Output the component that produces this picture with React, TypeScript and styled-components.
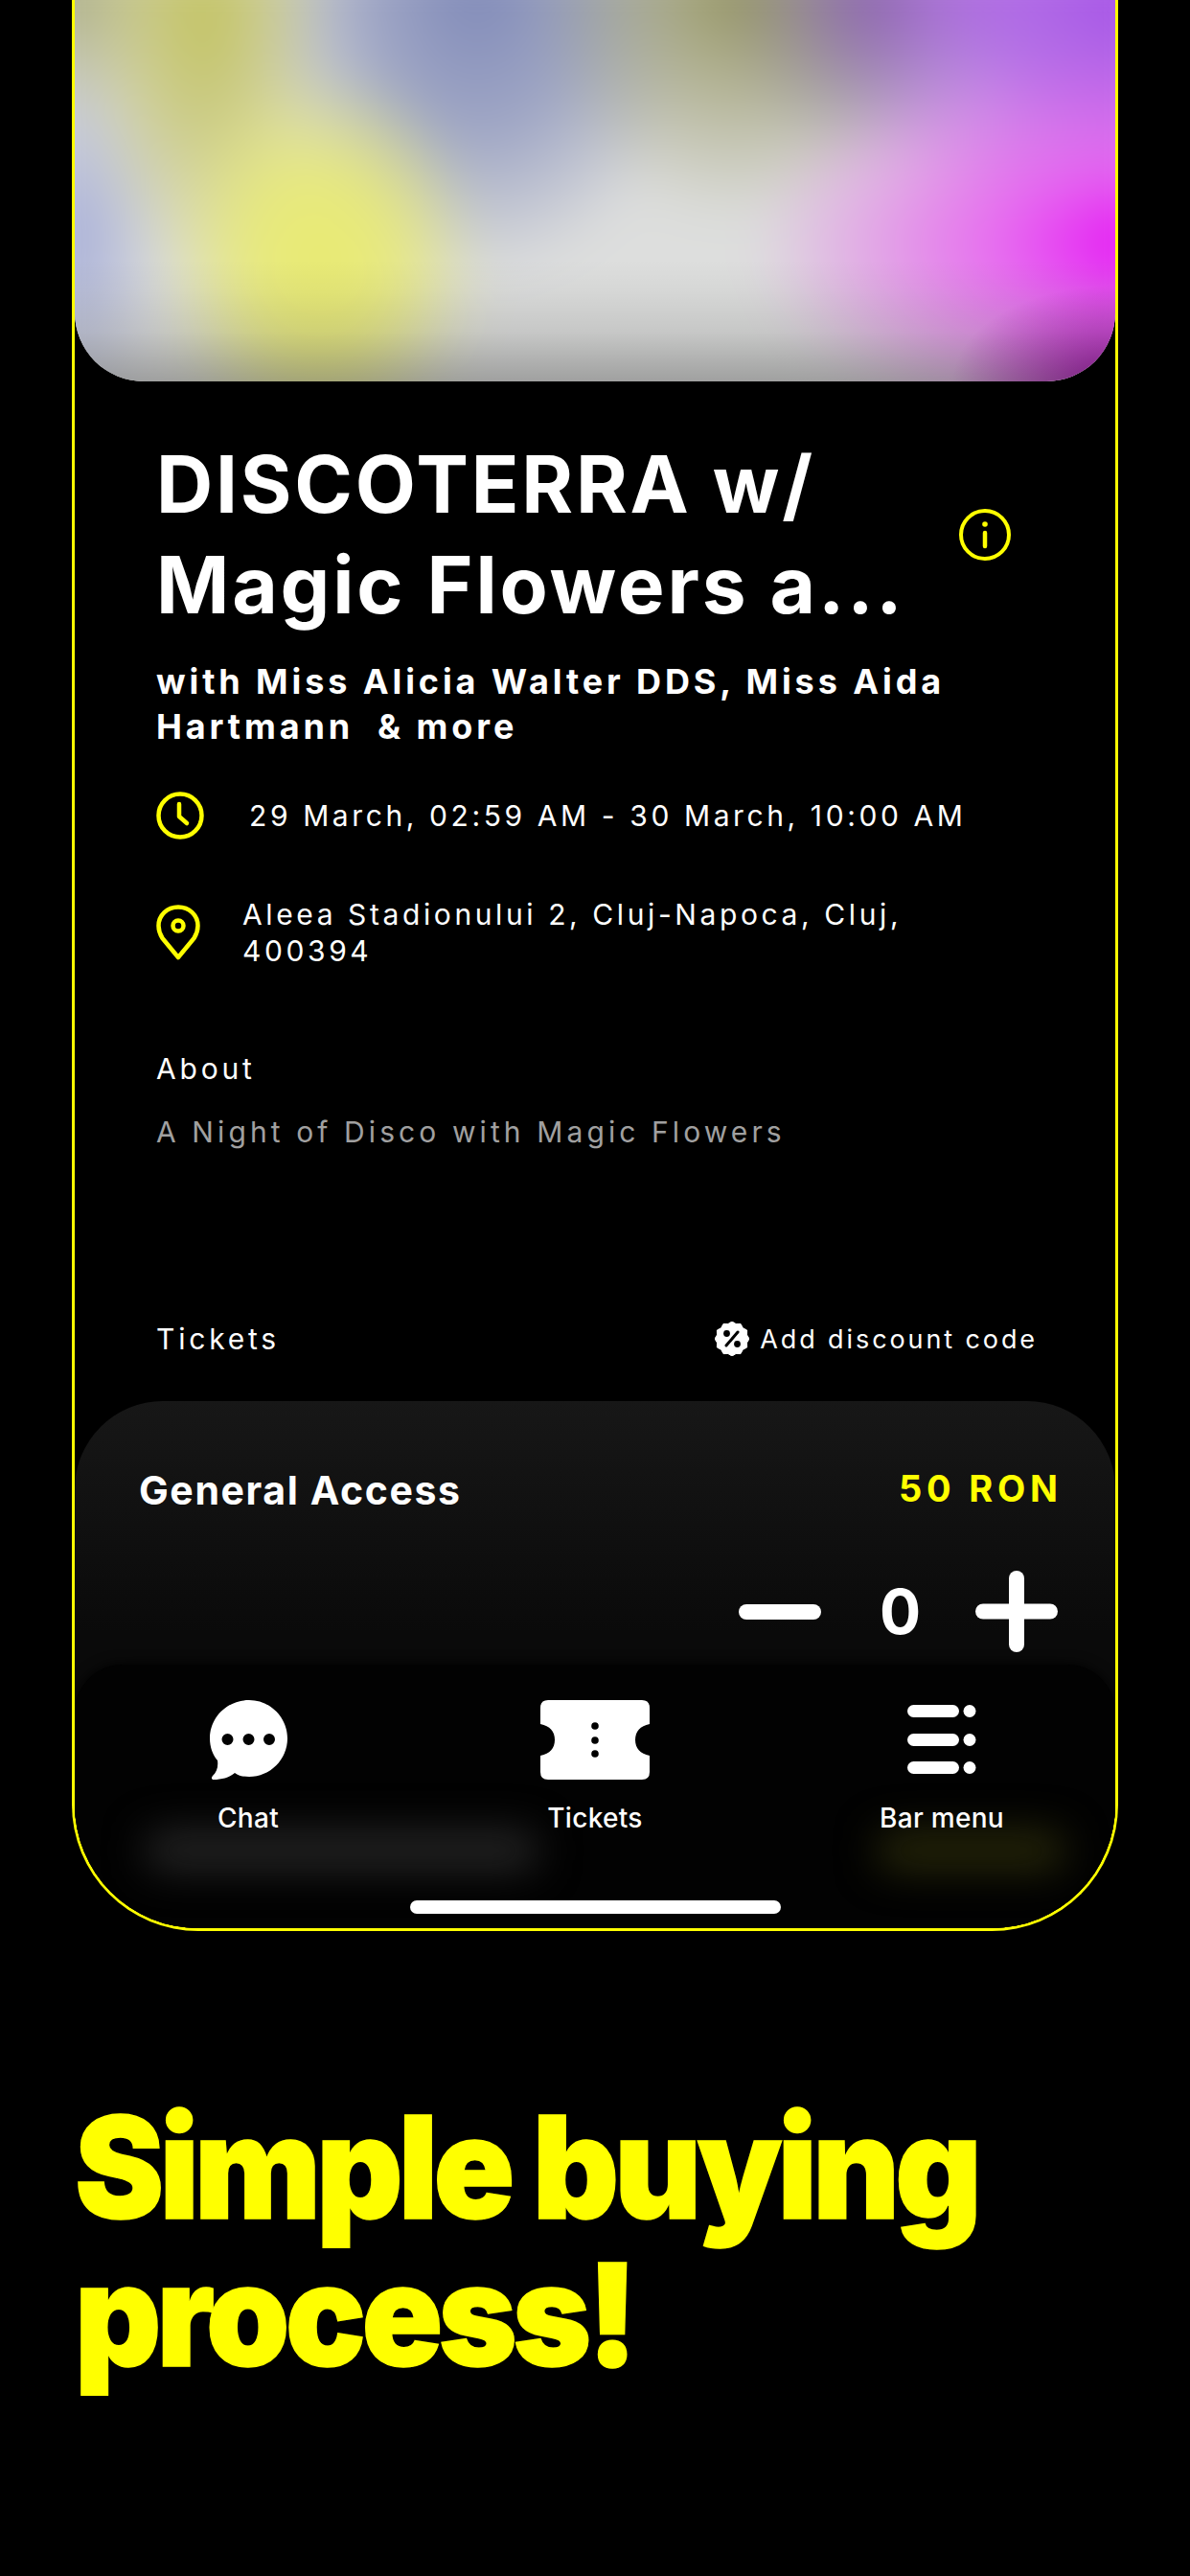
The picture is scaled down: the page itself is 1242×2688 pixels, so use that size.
import React from 'react';
import styled, { createGlobalStyle } from 'styled-components';

const YELLOW = '#ffff00';

const GlobalStyle = createGlobalStyle`
  html, body {
    margin: 0;
    padding: 0;
    background: #000;
    font-family: Inter, "Liberation Sans", Arial, sans-serif;
  }
`;

const Page = styled.div`
  width: 1242px;
  height: 2688px;
  overflow: hidden;
  background: #000;
  padding-left: 75px;
  box-sizing: border-box;
`;

const Phone = styled.div`
  position: relative;
  width: 1092px;
  height: 2015px;
  box-sizing: border-box;
  display: flex;
  flex-direction: column;
  border: 3px solid ${YELLOW};
  border-top: none;
  border-radius: 0 0 132px 132px;
  overflow: hidden;
`;

// blurred event artwork
const Hero = styled.div`
  position: relative;
  flex: none;
  height: 398px;
  border-radius: 0 0 72px 72px;
  overflow: hidden;
  background: #d9dad8;

  &::before {
    content: '';
    position: absolute;
    inset: -50px;
    filter: blur(26px);
    background:
      radial-gradient(170px 200px at 306px 320px, #e9eb70 0%, rgba(233, 235, 112, 0.85) 45%, rgba(233, 235, 112, 0) 100%),
      radial-gradient(130px 270px at 185px 70px, #c2c25e 0%, rgba(194, 194, 94, 0.6) 50%, rgba(194, 194, 94, 0) 100%),
      radial-gradient(100px 190px at 46px 300px, #a4acd8 0%, rgba(164, 172, 216, 0) 100%),
      radial-gradient(110px 150px at 40px 40px, #a8aa80 0%, rgba(168, 170, 128, 0) 100%),
      radial-gradient(400px 210px at 1160px 305px, #e40cf4 0%, rgba(232, 90, 242, 0.9) 35%, rgba(232, 160, 235, 0) 100%),
      radial-gradient(400px 250px at 1190px 40px, #a44ce8 0%, rgba(166, 80, 232, 0.75) 50%, rgba(166, 80, 232, 0) 100%),
      radial-gradient(150px 190px at 880px 40px, #7d7090 0%, rgba(125, 112, 144, 0) 100%),
      radial-gradient(210px 240px at 740px 40px, #949460 0%, rgba(148, 148, 96, 0) 100%),
      radial-gradient(230px 300px at 470px 40px, #7f89b8 0%, rgba(127, 137, 184, 0.65) 50%, rgba(127, 137, 184, 0) 100%),
      #dddedd;
  }

  &::after {
    content: '';
    position: absolute;
    inset: 0;
    background:
      linear-gradient(to bottom, rgba(0, 0, 0, 0) 68%, rgba(0, 0, 0, 0.03) 76%, rgba(0, 0, 0, 0.1) 87%, rgba(0, 0, 0, 0.28) 100%),
      radial-gradient(170px 100px at 100% 100%, rgba(150, 0, 160, 0.8), rgba(150, 0, 160, 0) 100%);
  }
`;

const Details = styled.div`
  flex: none;
  padding: 55px 81px 0 85px;
  color: #fff;
`;

const TitleRow = styled.div`
  display: flex;
  align-items: center;
  justify-content: space-between;
  padding-right: 28px;
`;

const Title = styled.h1`
  margin: 0;
  font-size: 82px;
  line-height: 105px;
  font-weight: 700;
  letter-spacing: 2.8px;
`;

const Artists = styled.div`
  margin-top: 25px;
  font-size: 36px;
  line-height: 47px;
  font-weight: 700;
  letter-spacing: 3.9px;
  white-space: pre-wrap;
`;

const InfoRow = styled.div<{ $gap: number; $top: number }>`
  display: flex;
  align-items: center;
  gap: ${p => p.$gap}px;
  margin-top: ${p => p.$top}px;
  font-size: 30px;
  line-height: 38px;
  letter-spacing: 3.6px;
`;

const SectionLabel = styled.div`
  font-size: 30px;
  line-height: 38px;
  letter-spacing: 3.8px;
`;

const AboutLabel = styled(SectionLabel)`
  margin-top: 85px;
`;

const AboutText = styled(SectionLabel)`
  margin-top: 28px;
  letter-spacing: 4.1px;
  color: #a0a0a0;
`;

const TicketsHeader = styled.div`
  display: flex;
  justify-content: space-between;
  align-items: center;
  margin-top: 178px;
`;

const DiscountLink = styled.div`
  display: flex;
  align-items: center;
  gap: 11px;
  font-size: 27px;
  letter-spacing: 2.9px;
`;

const TicketCard = styled.div`
  flex: 1;
  margin-top: 46px;
  padding: 68px 60px 0 67px;
  border-radius: 92px 92px 0 0;
  background: linear-gradient(to bottom, #171717 0px, #0a0a0a 240px, #0a0a0a 100%);
  color: #fff;
`;

const TicketHead = styled.div`
  display: flex;
  justify-content: space-between;
  align-items: flex-start;
`;

const TicketName = styled.div`
  font-size: 41px;
  line-height: 50px;
  font-weight: 700;
  letter-spacing: 1.6px;
`;

const TicketPrice = styled.div`
  font-size: 38px;
  line-height: 46px;
  font-weight: 700;
  letter-spacing: 4.8px;
  margin-right: -4.8px;
  color: ${YELLOW};
`;

const Stepper = styled.div`
  display: flex;
  justify-content: flex-end;
  align-items: center;
  gap: 61px;
  margin-top: 59px;
`;

const Count = styled.div`
  width: 39px;
  text-align: center;
  font-size: 64px;
  line-height: 85px;
  font-weight: 700;
`;

const TabBar = styled.nav`
  position: absolute;
  left: 0;
  right: 0;
  bottom: 0;
  height: 275px;
  display: grid;
  grid-template-columns: repeat(3, 1fr);
  padding-top: 37px;
  box-sizing: border-box;
  border-radius: 50px 50px 0 0;
  background: #020202;
  box-shadow: 0 0 14px #020202;
  color: #fff;
`;

const Tab = styled.div`
  position: relative;
  z-index: 1;
  display: flex;
  flex-direction: column;
  align-items: center;
  font-size: 28px;
  line-height: 34px;
  font-weight: 500;
  letter-spacing: 0.3px;
`;

const TabIcon = styled.div`
  height: 83px;
  display: flex;
  align-items: center;
  margin-bottom: 23px;
`;

const BlurBlob = styled.div<{ $left: number; $width: number; $color: string }>`
  position: absolute;
  left: ${p => p.$left}px;
  width: ${p => p.$width}px;
  top: 176px;
  height: 36px;
  border-radius: 12px;
  background: ${p => p.$color};
  filter: blur(22px);
`;

const HomeIndicator = styled.div`
  position: absolute;
  left: 350px;
  bottom: 15px;
  width: 387px;
  height: 14px;
  border-radius: 7px;
  background: #fff;
`;

const Headline = styled.h2`
  margin: 170px 0 0 3px;
  font-size: 148px;
  line-height: 154px;
  font-weight: 900;
  letter-spacing: -5px;
  color: ${YELLOW};
  -webkit-text-stroke: 1.5px ${YELLOW};
  transform: scaleX(0.945);
  transform-origin: left center;
`;

const InfoIcon = () => (
  <svg width="54" height="54" viewBox="0 0 54 54" fill="none" stroke={YELLOW} strokeWidth="4">
    <circle cx="27" cy="27" r="25" />
    <path d="M27 25v14" strokeLinecap="round" strokeWidth="4.5" />
    <circle cx="27" cy="16" r="2.8" fill={YELLOW} stroke="none" />
  </svg>
);

const ClockIcon = () => (
  <svg width="50" height="50" viewBox="0 0 50 50" fill="none" stroke={YELLOW} strokeWidth="4.5">
    <circle cx="25" cy="25" r="22.5" />
    <path d="M24 13v13l8 7" strokeLinecap="round" strokeLinejoin="round" />
  </svg>
);

const PinIcon = () => (
  <svg width="46" height="58" viewBox="0 0 46 58" fill="none" stroke={YELLOW} strokeWidth="4.5" strokeLinejoin="round">
    <path d="M23 2.500C11.500 2.500 2.500 11 2.500 22c0 5 1.500 9 4 13L23 55l16.500-20c2.500-4 4-8 4-13C43.500 11 34.500 2.500 23 2.500Z" />
    <circle cx="23" cy="22" r="5.500" />
  </svg>
);

const DiscountIcon = () => {
  // scalloped badge
  const points = Array.from({ length: 24 }, (_, i) => {
    const r = i % 2 === 0 ? 18 : 16;
    const a = (i / 24) * Math.PI * 2;
    return `${(18 + r * Math.cos(a)).toFixed(1)},${(18 + r * Math.sin(a)).toFixed(1)}`;
  }).join(' ');
  return (
    <svg width="36" height="36" viewBox="0 0 36 36">
      <polygon points={points} fill="#fff" stroke="#fff" strokeWidth="1" strokeLinejoin="round" />
      <path d="M24 11 12 25" stroke="#000" strokeWidth="3" strokeLinecap="round" />
      <circle cx="12.500" cy="12.500" r="3.400" fill="#000" />
      <circle cx="23.500" cy="23.500" r="3.400" fill="#000" />
    </svg>
  );
};

const MinusIcon = () => (
  <svg width="86" height="16" viewBox="0 0 86 16">
    <rect width="86" height="16" rx="8" fill="#fff" />
  </svg>
);

const PlusIcon = () => (
  <svg width="86" height="85" viewBox="0 0 86 85" fill="#fff">
    <rect y="34.500" width="86" height="16" rx="8" />
    <rect x="35" width="16" height="85" rx="8" />
  </svg>
);

const ChatIcon = () => (
  <svg width="81" height="83" viewBox="0 0 81 83">
    <path
      fillRule="evenodd"
      fill="#fff"
      d="M41 0C63 0 81 18 81 40C81 62 63 80 41 80C35 80 30 79 26 76C20 81 12 83 4 83C2 83 1 81 3 79C7 75 9 70 8 63C3 57 0 49 0 40C0 18 18 0 41 0ZM18.500 35a6 6 0 1 0 0 12a6 6 0 1 0 0-12ZM40.500 35a6 6 0 1 0 0 12a6 6 0 1 0 0-12ZM62 35a6 6 0 1 0 0 12a6 6 0 1 0 0-12Z"
    />
  </svg>
);

const TicketIcon = () => (
  <svg width="114" height="83" viewBox="0 0 114 83">
    <path
      fill="#fff"
      d="M8 0H106Q114 0 114 8V25C104 27 99 33 99 41.500C99 50 104 56 114 58V75Q114 83 106 83H8Q0 83 0 75V58C10 56 15 50 15 41.500C15 33 10 27 0 25V8Q0 0 8 0Z"
    />
    <circle cx="57" cy="27" r="3.800" fill="#000" />
    <circle cx="57" cy="42" r="3.800" fill="#000" />
    <circle cx="57" cy="56" r="3.800" fill="#000" />
  </svg>
);

const MenuIcon = () => (
  <svg width="72" height="73" viewBox="0 0 72 73" fill="#fff">
    {[0, 30, 59].map(y => (
      <React.Fragment key={y}>
        <rect y={y} width="54" height="13" rx="6.500" />
        <circle cx="65" cy={y + 6.500} r="6.500" />
      </React.Fragment>
    ))}
  </svg>
);

export default function App() {
  return (
    <Page>
      <GlobalStyle />
      <Phone>
        <Hero />
        <Details>
          <TitleRow>
            <Title>
              DISCOTERRA w/
              <br />
              Magic Flowers a...
            </Title>
            <InfoIcon />
          </TitleRow>
          <Artists>{'with Miss Alicia Walter DDS, Miss Aida\nHartmann  & more'}</Artists>
          <InfoRow $gap={47} $top={44}>
            <ClockIcon />
            <span>29 March, 02:59 AM - 30 March, 10:00 AM</span>
          </InfoRow>
          <InfoRow $gap={44} $top={59}>
            <PinIcon />
            <span>
              Aleea Stadionului 2, Cluj-Napoca, Cluj,
              <br />
              400394
            </span>
          </InfoRow>
          <AboutLabel>About</AboutLabel>
          <AboutText>A Night of Disco with Magic Flowers</AboutText>
          <TicketsHeader>
            <SectionLabel>Tickets</SectionLabel>
            <DiscountLink>
              <DiscountIcon />
              Add discount code
            </DiscountLink>
          </TicketsHeader>
        </Details>
        <TicketCard>
          <TicketHead>
            <TicketName>General Access</TicketName>
            <TicketPrice>50 RON</TicketPrice>
          </TicketHead>
          <Stepper>
            <MinusIcon />
            <Count>0</Count>
            <PlusIcon />
          </Stepper>
        </TicketCard>
        <TabBar>
          <BlurBlob $left={75} $width={407} $color="#2a2a2a" />
          <BlurBlob $left={839} $width={193} $color="#2c2c0a" />
          <Tab>
            <TabIcon>
              <ChatIcon />
            </TabIcon>
            Chat
          </Tab>
          <Tab>
            <TabIcon>
              <TicketIcon />
            </TabIcon>
            Tickets
          </Tab>
          <Tab>
            <TabIcon>
              <MenuIcon />
            </TabIcon>
            Bar menu
          </Tab>
          <HomeIndicator />
        </TabBar>
      </Phone>
      <Headline>
        Simple buying
        <br />
        process!
      </Headline>
    </Page>
  );
}
